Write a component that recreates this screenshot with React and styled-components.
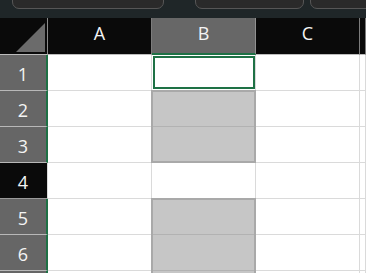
import React from "react";
import styled, { createGlobalStyle, css } from "styled-components";

const Global = createGlobalStyle`
  html, body { margin: 0; padding: 0; background: #ffffff; overflow: hidden; }
  body { font-family: "Open Sans", "Noto Sans", sans-serif; }
`;

const GREEN = "#1e7145";
const GRID = "#dadada";

const Page = styled.div`
  width: 366px;
  height: 273px;
  overflow: hidden;
  display: flex;
  flex-direction: column;
`;

const TopBar = styled.div`
  height: 18px;
  flex: none;
  background: #1f2628;
  display: flex;
  align-items: flex-end;
  padding-left: 12px;
  overflow: hidden;
`;

const Pill = styled.div`
  flex: none;
  width: ${(p) => p.$w}px;
  margin-left: ${(p) => p.$gap || 0}px;
  height: 22px;
  margin-bottom: 9px;
  box-sizing: border-box;
  background: #2a2a2a;
  border: 1px solid #565656;
  border-radius: 7px;
`;

const Sheet = styled.div`
  display: grid;
  grid-template-columns: 48px 104px 104px 104px 1fr;
  grid-template-rows: 37px;
  grid-auto-rows: 36px;
`;

const Corner = styled.div`
  box-sizing: border-box;
  background: #0a0a0a;
  border-right: 1px solid #8a8a8a;
  border-bottom: 1px solid #bdbdbd;
  display: flex;
  align-items: flex-end;
  justify-content: flex-end;
  padding: 0 2px 2px 0;
  svg { display: block; }
`;

const ColHead = styled.div`
  box-sizing: border-box;
  background: ${(p) => (p.$sel ? "#676767" : "#0a0a0a")};
  border-right: 1px solid ${(p) => (p.$sel ? "#909090" : "#7c7c7c")};
  border-bottom: ${(p) => (p.$sel ? `2px solid ${GREEN}` : "1px solid #bdbdbd")};
  color: #f4f4f4;
  font-size: 18px;
  display: flex;
  align-items: center;
  justify-content: center;
  padding-bottom: ${(p) => (p.$sel ? 5 : 6)}px;
  line-height: 1;
`;

const RowHead = styled.div`
  box-sizing: border-box;
  background: ${(p) => (p.$sel ? "#666666" : "#0a0a0a")};
  border-right: ${(p) => (p.$sel ? `2px solid ${GREEN}` : `1px solid ${GRID}`)};
  border-bottom: 1px solid ${(p) => (p.$sel ? "#b8b8b8" : "#9a9a9a")};
  color: #f4f4f4;
  font-size: 18px;
  line-height: 1;
  display: flex;
  align-items: center;
  justify-content: center;
  padding: 3px ${(p) => (p.$sel ? 0 : 1)}px 0 0;
`;

const Cell = styled.div`
  position: relative;
  box-sizing: border-box;
  background: ${(p) => (p.$range ? "#c6c6c6" : "#ffffff")};
  border-right: 1px solid ${GRID};
  border-bottom: 1px solid ${(p) => (p.$range ? "#b2b2b2" : GRID)};
  display: flex;
  ${(p) =>
    p.$range &&
    css`
      &::after {
        content: "";
        position: absolute;
        left: -1px;
        right: -1px;
        top: -1px;
        bottom: -1px;
        border-left: 2px solid #a9a9a9;
        border-right: 2px solid #a9a9a9;
        border-top: ${p.$range === "top" ? "2px solid #a9a9a9" : "none"};
        border-bottom: ${p.$range === "bottom" ? "2px solid #a9a9a9" : "none"};
        pointer-events: none;
      }
    `}
`;

const ActiveBox = styled.div`
  flex: 1;
  margin: 1px 0 1px 1px;
  border: 2px solid ${GREEN};
`;

const cols = ["A", "B", "C", ""];
const rows = [
  { n: 1, sel: true, label: "1" },
  { n: 2, sel: true, label: "2" },
  { n: 3, sel: true, label: "3" },
  { n: 4, sel: false, label: "4" },
  { n: 5, sel: true, label: "5" },
  { n: 6, sel: true, label: "6" },
  { n: 7, sel: true, label: "" },
];

const bState = {
  1: "active",
  2: "top",
  3: "bottom",
  5: "top",
  6: "mid",
  7: "mid",
};

export default function App() {
  return (
    <Page>
      <Global />
      <TopBar>
        <Pill $w={152} />
        <Pill $w={109} $gap={31} />
        <Pill $w={80} $gap={6} />
      </TopBar>
      <Sheet>
        <Corner>
          <svg width="29" height="29" viewBox="0 0 29 29">
            <polygon points="29,0 29,29 0,29" fill="#6b6b6b" />
          </svg>
        </Corner>
        {cols.map((c, i) => (
          <ColHead key={i} $sel={c === "B"}>
            {c}
          </ColHead>
        ))}
        {rows.map((r) => (
          <React.Fragment key={r.n}>
            <RowHead $sel={r.sel}>{r.label}</RowHead>
            {cols.map((c, i) => {
              const st = c === "B" ? bState[r.n] : undefined;
              if (st === "active") {
                return (
                  <Cell key={i}>
                    <ActiveBox />
                  </Cell>
                );
              }
              return <Cell key={i} $range={st} />;
            })}
          </React.Fragment>
        ))}
      </Sheet>
    </Page>
  );
}
